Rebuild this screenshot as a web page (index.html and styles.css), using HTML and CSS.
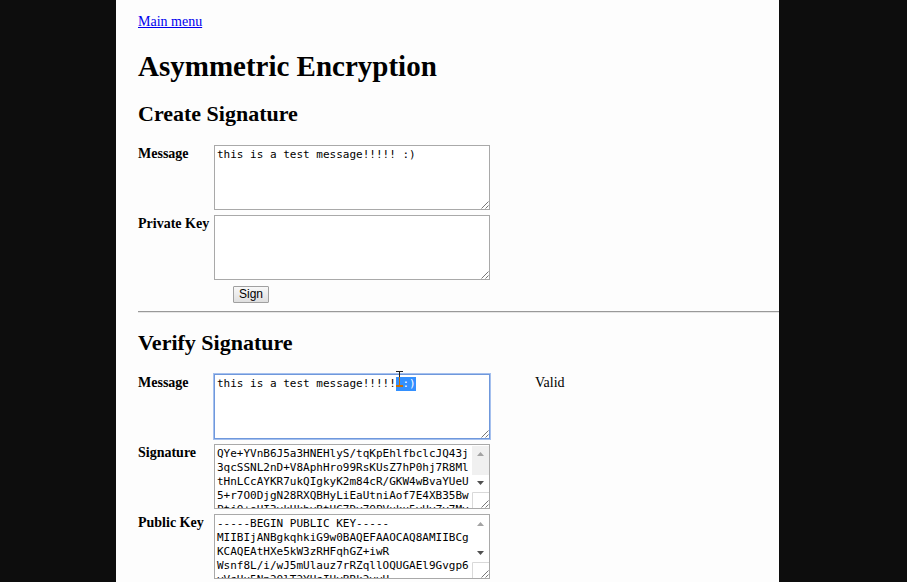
FILE: index.html
```html
<!DOCTYPE html>
<html lang="en">
<head>
<meta charset="utf-8">
<title>Asymmetric Encryption</title>
<link rel="stylesheet" href="styles.css">
</head>
<body>
<main class="page">
  <a class="menu-link" href="#">Main menu</a>
  <h1>Asymmetric Encryption</h1>

  <h2>Create Signature</h2>
  <form class="form">
    <label for="create-message">Message</label>
    <div class="field">
      <textarea id="create-message">this is a test message!!!!! :)</textarea>
      <svg class="grip" viewBox="0 0 8 8"><path d="M0.5 7.5 7.5 0.5M4.5 7.5 7.5 4.5"/></svg>
    </div>
    <label for="private-key">Private Key</label>
    <div class="field">
      <textarea id="private-key"></textarea>
      <svg class="grip" viewBox="0 0 8 8"><path d="M0.5 7.5 7.5 0.5M4.5 7.5 7.5 4.5"/></svg>
    </div>
    <div class="actions"><button type="button">Sign</button></div>
  </form>

  <hr>

  <h2>Verify Signature</h2>
  <form class="form">
    <label for="verify-message">Message</label>
    <div class="field">
      <textarea id="verify-message">this is a test message!!!!! :)</textarea>
      <svg class="grip" viewBox="0 0 8 8"><path d="M0.5 7.5 7.5 0.5M4.5 7.5 7.5 4.5"/></svg>
      <svg class="pointer" viewBox="0 0 7 16"><path class="dark" d="M0 0H7V1H4V6H3V1H0z"/><path class="warm" d="M3 6H4V14H7V16H0V14H3z"/></svg>
    </div>
    <output class="result" for="verify-message">Valid</output>
    <label for="signature">Signature</label>
    <div class="field">
      <textarea id="signature">QYe+YVnB6J5a3HNEHlyS/tqKpEhlfbclcJQ43j
3qcSSNL2nD+V8AphHro99RsKUsZ7hP0hj7R8Ml
tHnLCcAYKR7ukQIgkyK2m84cR/GKW4wBvaYUeU
5+r7O0DjgN28RXQBHyLiEaUtniAof7E4XB35Bw
PtjQ+eUI3vkUkhyBtUG7Dy7OPVuku5vUyZy7My</textarea>
      <svg class="scroll" viewBox="0 0 17 63"><path class="thumb" d="M0 1H17V30H0z"/><path class="up" d="M5 11 8.5 7 12 11z"/><path class="down" d="M5 36 8.5 40 12 36z"/><path class="corner" d="M.5 63V47.5H17"/></svg>
      <svg class="grip" viewBox="0 0 8 8"><path d="M0.5 7.5 7.5 0.5M4.5 7.5 7.5 4.5"/></svg>
    </div>
    <label for="public-key">Public Key</label>
    <div class="field">
      <textarea id="public-key">-----BEGIN PUBLIC KEY-----
MIIBIjANBgkqhkiG9w0BAQEFAAOCAQ8AMIIBCg
KCAQEAtHXe5kW3zRHFqhGZ+iwR
Wsnf8L/i/wJ5mUlauz7rRZqllOQUGAEl9Gvgp6
yVsUu5Nn2QlT2YUsIUyBRk2yvU</textarea>
      <svg class="scroll" viewBox="0 0 17 63"><path class="up" d="M5 11 8.5 7 12 11z"/><path class="down" d="M5 36 8.5 40 12 36z"/><path class="corner" d="M.5 63V47.5H17"/></svg>
      <svg class="grip" viewBox="0 0 8 8"><path d="M0.5 7.5 7.5 0.5M4.5 7.5 7.5 4.5"/></svg>
    </div>
  </form>
</main>
<script src="script.js"></script>
</body>
</html>
```
FILE: styles.css
```css
* { box-sizing: border-box; }
html, body { min-height: 100%; }
html { background: #0d0d0d; overflow: hidden; }
body {
  margin: 0 128px 0 116px;
  font: 14px/18px "Liberation Serif", serif;
  color: #000;
}
.page {
  min-height: 100vh;
  padding: 13px 0 3px 22px;
  background: #fdfdfd;
}
.menu-link { display: block; width: max-content; color: #00e; }
h1, h2 { margin: 0; font-weight: bold; }
h1 { margin-top: 18px; font-size: 29px; line-height: 34px; }
h2 { margin: 18px 0; font-size: 22px; line-height: 26px; }
.form {
  display: grid;
  grid-template-columns: 72px 276px 1fr;
  gap: 5px 4px;
}
.form label { grid-column: 1; font-weight: bold; white-space: nowrap; }
.field { position: relative; grid-column: 2; height: 65px; }
textarea {
  display: block;
  width: 100%;
  height: 100%;
  margin: 0;
  padding: 2px;
  border: 1px solid #a9a9a9;
  border-radius: 0;
  background: #fff;
  color: #000;
  font: 11px/14px "DejaVu Sans Mono", monospace;
  white-space: pre;
  overflow: hidden;
  resize: none;
  outline: none;
}
textarea:focus { border-color: #6f98dc; box-shadow: 0 0 0 1px #a5c0ee; }
textarea::selection { background: #3390ff; color: #fff; }
.grip {
  position: absolute;
  right: 1px;
  bottom: 1px;
  width: 8px;
  height: 8px;
  fill: none;
  stroke: #777;
}
.scroll {
  position: absolute;
  top: 1px;
  right: 1px;
  width: 17px;
  height: 63px;
  background: #fff;
}
.thumb { fill: #f0f0f0; }
.up { fill: #a3a3a3; }
.down { fill: #505050; }
.corner { fill: none; stroke: #d9d9d9; }
.pointer {
  position: absolute;
  z-index: 1;
  left: 182px;
  top: -3px;
  width: 7px;
  height: 16px;
}
.dark { fill: #222; }
.warm { fill: #cc6f00; }
.result { grid-column: 3; margin-left: 41px; }
.actions { grid-column: 2; height: 18px; padding: 1px 0 0 19px; }
button {
  display: block;
  height: 17px;
  padding: 0 5px;
  border: 1px solid #a0a0a0;
  border-radius: 1px;
  background: linear-gradient(#f8f8f8, #dfdfdf);
  color: #000;
  font: 12px/15px "Liberation Sans", sans-serif;
}
hr {
  height: 2px;
  margin: 8px 0 0;
  border: 0;
  border-top: 1px solid #999;
  background: #e6e6e6;
}
hr + h2 { margin-top: 17px; }
```
FILE: script.js
```js
const message = document.getElementById("verify-message");
message.focus({ preventScroll: true });
message.setSelectionRange(27, 30);
```
